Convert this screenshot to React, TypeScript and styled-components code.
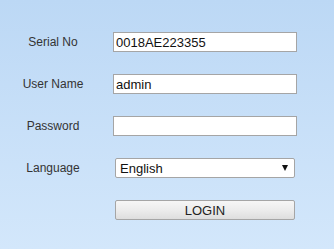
import React from "react";
import styled, { createGlobalStyle } from "styled-components";

const GlobalStyle = createGlobalStyle`
  html, body {
    margin: 0;
    padding: 0;
    height: 100%;
  }
  body {
    font-family: "Liberation Sans", Arial, sans-serif;
    background: linear-gradient(to bottom, #bcd8f5 0%, #d3e7fb 100%);
    min-height: 249px;
  }
`;

const Page = styled.div`
  width: 334px;
  height: 249px;
  box-sizing: border-box;
  padding-top: 32px;
`;

const Form = styled.form`
  display: grid;
  grid-template-columns: 106px 184px;
  column-gap: 7px;
  row-gap: 22px;
  align-items: center;
  margin: 0;
`;

const Label = styled.label`
  font-size: 12px;
  color: #333;
  text-align: center;
  line-height: 20px;
`;

const TextInput = styled.input`
  box-sizing: border-box;
  width: 184px;
  height: 20px;
  margin: 0;
  padding: 0 2px;
  border: 1px solid #a5a5a5;
  background: #fff;
  font-family: "Liberation Sans", Arial, sans-serif;
  font-size: 13px;
  color: #111;
  outline: none;
`;

const SelectWrap = styled.div`
  position: relative;
  width: 180px;
  height: 20px;
  margin-left: 2px;
`;

const Select = styled.select`
  appearance: none;
  box-sizing: border-box;
  width: 100%;
  height: 20px;
  margin: 0;
  padding: 0 4px;
  border: 1px solid #a5a5a5;
  border-radius: 2px;
  background: #fff;
  font-family: "Liberation Sans", Arial, sans-serif;
  font-size: 13px;
  color: #111;
  outline: none;
`;

const Arrow = styled.span`
  position: absolute;
  right: 7px;
  top: 7px;
  width: 0;
  height: 0;
  border-left: 3.5px solid transparent;
  border-right: 3.5px solid transparent;
  border-top: 6px solid #111;
  pointer-events: none;
`;

const LoginButton = styled.button`
  box-sizing: border-box;
  width: 180px;
  height: 20px;
  margin: 0 0 0 2px;
  padding: 0;
  border: 1px solid #a5a5a5;
  border-radius: 2px;
  background: linear-gradient(to bottom, #f6f6f6 0%, #ececec 50%, #dedede 100%);
  font-family: "Liberation Sans", Arial, sans-serif;
  font-size: 13px;
  color: #222;
  cursor: pointer;
`;

const App: React.FC = () => {
  return (
    <>
      <GlobalStyle />
      <Page>
        <Form onSubmit={(e) => e.preventDefault()}>
          <Label htmlFor="serial">Serial No</Label>
          <TextInput id="serial" defaultValue="0018AE223355" />

          <Label htmlFor="user">User Name</Label>
          <TextInput id="user" defaultValue="admin" />

          <Label htmlFor="pass">Password</Label>
          <TextInput id="pass" type="password" />

          <Label htmlFor="lang">Language</Label>
          <SelectWrap>
            <Select id="lang" defaultValue="en">
              <option value="en">English</option>
            </Select>
            <Arrow />
          </SelectWrap>

          <span />
          <LoginButton type="submit">LOGIN</LoginButton>
        </Form>
      </Page>
    </>
  );
};

export default App;
